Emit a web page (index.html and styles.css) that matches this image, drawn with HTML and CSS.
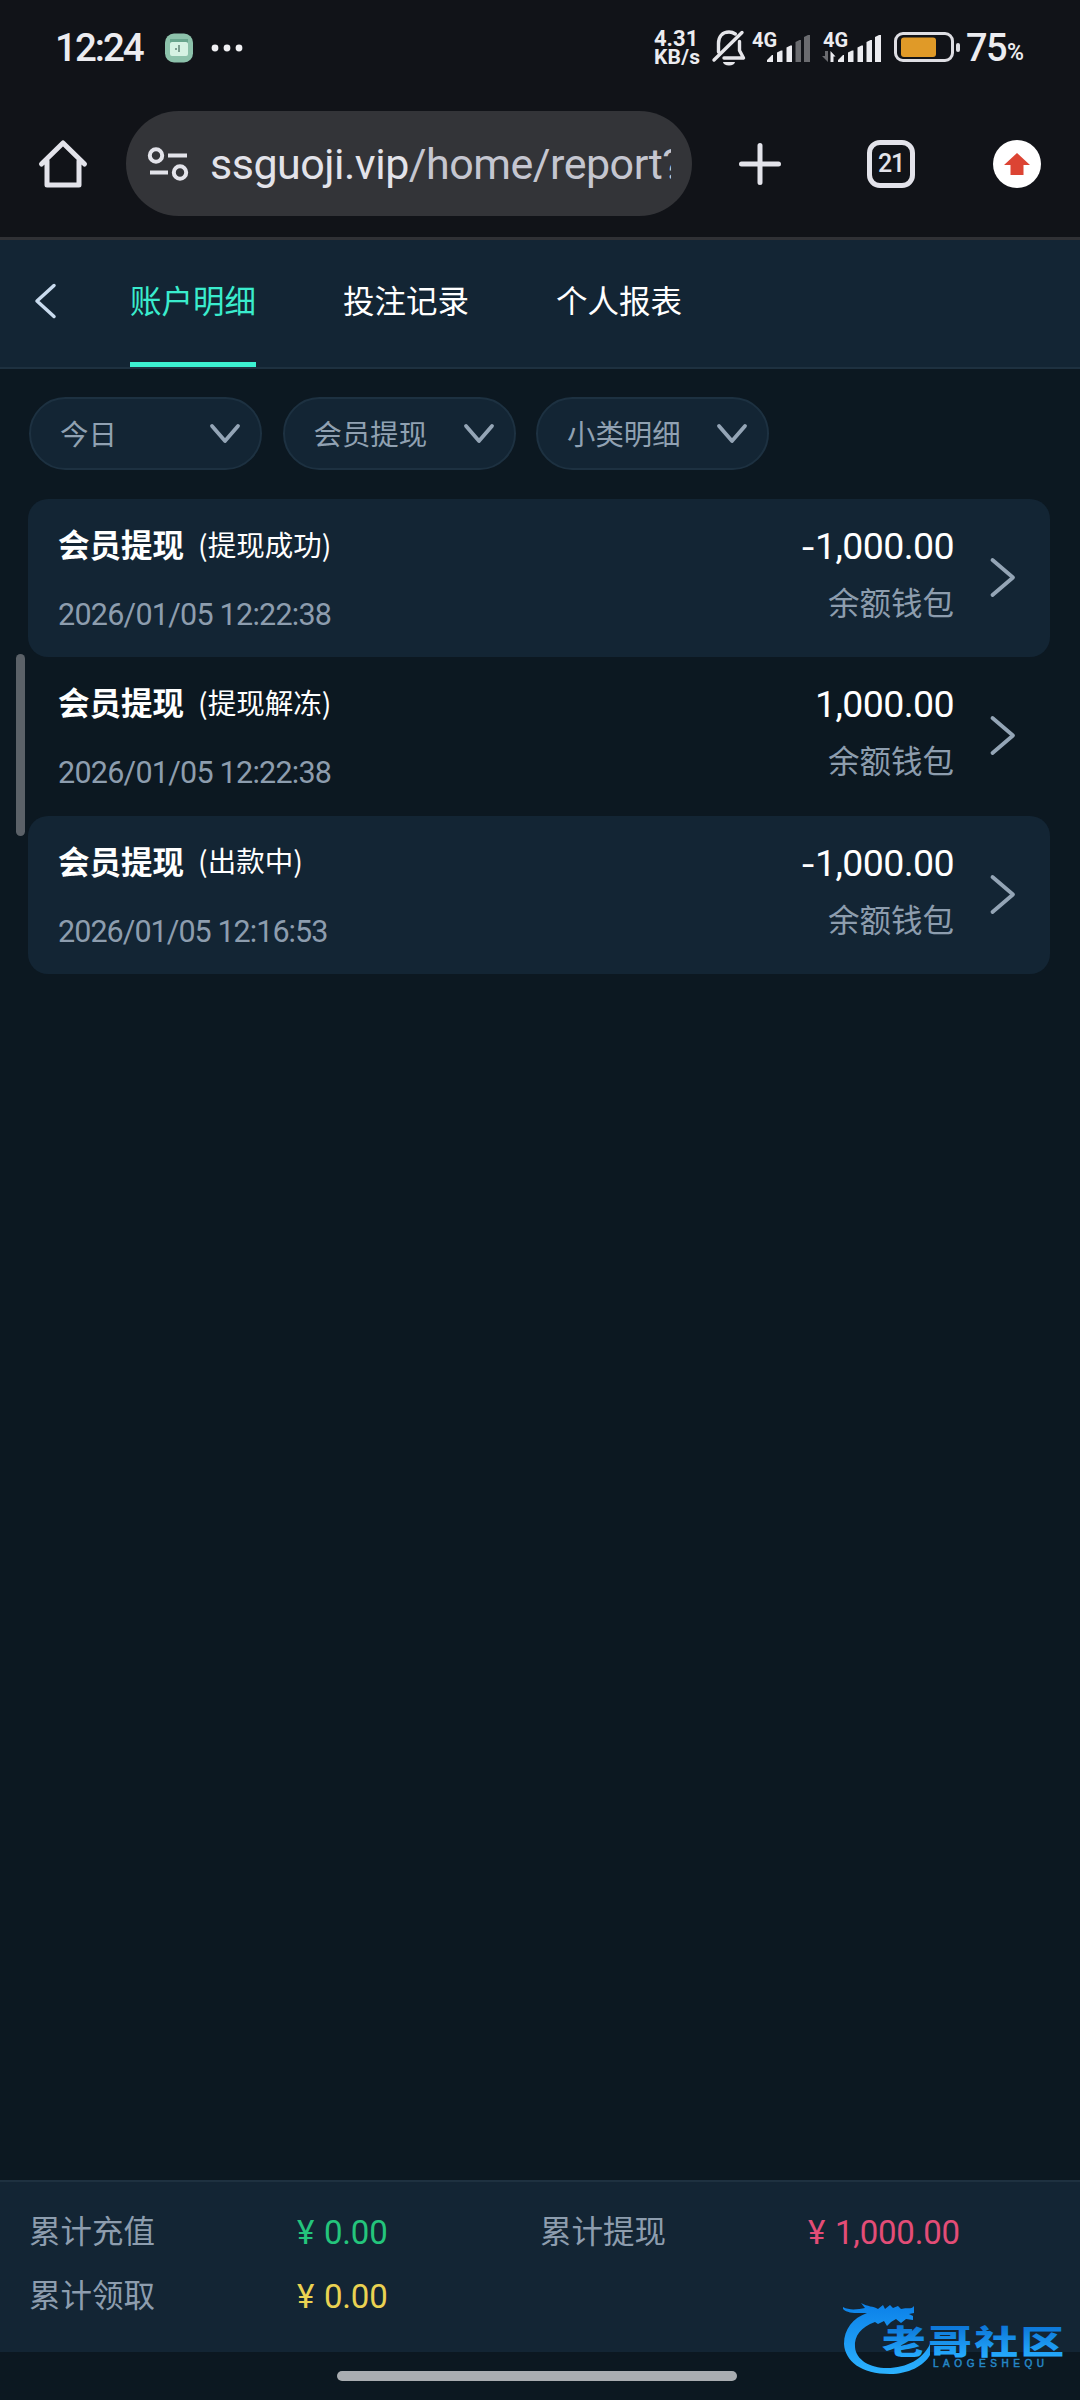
FILE: index.html
```html
<!DOCTYPE html>
<html lang="zh-CN">
<head>
<meta charset="utf-8">
<title>账户明细</title>
<link rel="stylesheet" href="styles.css">
</head>
<body>
<div class="screen">
  <header class="statusbar">
    <span class="clock">12:24</span>
    <svg class="app-badge" width="30" height="30" viewBox="0 0 30 30"><rect x="1" y="0.5" width="28" height="29" rx="9" fill="#8dc2ab"/><rect x="6" y="6" width="18" height="4" fill="#69a58d"/><rect x="6" y="9" width="18" height="14" rx="2" fill="#d6f2e3"/><path d="M15 12v7M12 15v2" stroke="#7d9e90" stroke-width="2"/></svg>
    <svg class="more" width="32" height="8" viewBox="0 0 32 8" fill="#f0f0f3"><circle cx="4" cy="4" r="3.4"/><circle cx="16" cy="4" r="3.4"/><circle cx="28" cy="4" r="3.4"/></svg>
    <div class="speed"><span class="rate">4.31</span><span class="unit">KB/s</span></div>
    <svg class="bell" width="36" height="38" viewBox="0 0 36 38" fill="none" stroke="#e6e6ea" stroke-width="3.4" stroke-linecap="round" stroke-linejoin="round"><path d="M7.5 23V14.500C7.500 7.500 11.500 3 18 3C20.500 3 22.500 3.700 24.300 5M28.500 12.500V21.500L32.500 29H13M3 31L31 3.500"/><path d="M12 33h12a6 3.500 0 0 1-12 0z" fill="#e6e6ea" stroke="none"/></svg>
    <div class="signal">
      <span class="net">4G</span>
      <svg width="60" height="30" viewBox="0 0 60 30" fill="#ececf0"><path d="M15 29v-2l5-5h1v7zM25 29V19.500l4-2h1.500V29zM34.500 29V14.500l4-2H40V29z"/><path d="M43.500 29V9l4-2H49v22zM52 29V4l4-2h2v27z" fill="#6a6b6f"/></svg>
    </div>
    <div class="signal second">
      <span class="net">4G</span>
      <svg width="60" height="30" viewBox="0 0 60 30" fill="#ececf0"><path d="M15 29v-2l5-5h1v7zM25 29V19.500l4-2h1.500V29zM34.500 29V14.500l4-2H40V29zM43.500 29V9l4-2H49v22zM52 29V4l4-2h2v27zM7.500 29V18l5 5.500H10.500V29z"/><path d="M5 18v11L-1 23h3V18z" fill="#6a6b6f"/></svg>
    </div>
    <svg class="battery" width="68" height="32" viewBox="0 0 68 32"><rect x="1.500" y="1.500" width="57" height="27" rx="7.500" fill="none" stroke="#dedee3" stroke-width="3"/><rect x="7" y="5.500" width="35" height="19.500" rx="3" fill="#e09a28"/><rect x="62" y="11" width="4" height="9" rx="2" fill="#dedee3"/></svg>
    <span class="level">75</span><span class="percent">%</span>
  </header>

  <div class="toolbar">
    <svg class="home" width="50" height="50" viewBox="0 0 50 50" fill="none" stroke="#e3e3ea" stroke-width="5" stroke-linejoin="round" stroke-linecap="round"><path d="M3.500 25L25 4L46.500 25M9 22V46H41V22"/></svg>
    <div class="omnibox">
      <svg width="42" height="36" viewBox="0 0 42 36" fill="none" stroke="#e3e3ea" stroke-width="4"><circle cx="8" cy="9.500" r="6.200"/><path d="M20 9.500h19M2 26.500h18"/><circle cx="32" cy="26.500" r="6.200"/></svg>
      <div class="url">ssguoji.vip<span class="path">/home/report?</span></div>
    </div>
    <svg class="plus" width="44" height="44" viewBox="0 0 44 44" stroke="#e3e3ea" stroke-width="5" stroke-linecap="round"><path d="M22 3.500v37M3.500 22h37"/></svg>
    <div class="tabs-count">21</div>
    <svg class="update" width="48" height="48" viewBox="0 0 48 48"><circle cx="24" cy="24" r="24" fill="#fff"/><path d="M24 13L37 25H30.500V35H17.500V25H11z" fill="#dc4433"/></svg>
  </div>

  <nav class="nav">
    <svg class="back" width="24" height="38" viewBox="0 0 24 38" fill="none" stroke="#c9dbee" stroke-width="3.500" stroke-linecap="round" stroke-linejoin="round"><path d="M20 3.500L3 19L20 34.500"/></svg>
    <a class="tab active">账户明细</a>
    <a class="tab">投注记录</a>
    <a class="tab">个人报表</a>
  </nav>

  <div class="filters">
    <div class="filter">今日<svg width="32" height="22" viewBox="0 0 32 22"><path d="M3 3L16 18L29 3"/></svg></div>
    <div class="filter">会员提现<svg width="32" height="22" viewBox="0 0 32 22"><path d="M3 3L16 18L29 3"/></svg></div>
    <div class="filter">小类明细<svg width="32" height="22" viewBox="0 0 32 22"><path d="M3 3L16 18L29 3"/></svg></div>
  </div>

  <main class="records">
    <article class="record filled">
      <div class="info"><div class="title"><b>会员提现</b><span>(提现成功)</span></div><time>2026/01/05 12:22:38</time></div>
      <div class="sum"><div class="amount"><i>-</i>1,000.00</div><div class="wallet">余额钱包</div></div>
      <svg width="28" height="42" viewBox="0 0 28 42"><path d="M3.500 4L24 21.500L3.500 39"/></svg>
    </article>
    <article class="record">
      <div class="info"><div class="title"><b>会员提现</b><span>(提现解冻)</span></div><time>2026/01/05 12:22:38</time></div>
      <div class="sum"><div class="amount">1,000.00</div><div class="wallet">余额钱包</div></div>
      <svg width="28" height="42" viewBox="0 0 28 42"><path d="M3.500 4L24 21.500L3.500 39"/></svg>
    </article>
    <article class="record filled">
      <div class="info"><div class="title"><b>会员提现</b><span>(出款中)</span></div><time class="tight">2026/01/05 12:16:53</time></div>
      <div class="sum"><div class="amount"><i>-</i>1,000.00</div><div class="wallet">余额钱包</div></div>
      <svg width="28" height="42" viewBox="0 0 28 42"><path d="M3.500 4L24 21.500L3.500 39"/></svg>
    </article>
  </main>

  <footer class="totals">
    <div class="total"><span>累计充值</span><span class="value green"><i>¥</i>0.00</span></div>
    <div class="total"><span>累计提现</span><span class="value red"><i>¥</i>1,000.00</span></div>
    <div class="total"><span>累计领取</span><span class="value yellow"><i>¥</i>0.00</span></div>
  </footer>
  <div class="gesture"><div class="handle"></div></div>

  <div class="edge-handle"></div>
  <svg class="watermark" width="230" height="90" viewBox="0 0 230 90">
    <defs>
      <linearGradient id="ring" x1="0" y1="0" x2="0" y2="1"><stop offset="0" stop-color="#0b80e8"/><stop offset="1" stop-color="#2cb2ff"/></linearGradient>
      <linearGradient id="word" x1="0" y1="0" x2="0" y2="1"><stop offset="0.200" stop-color="#0b74d6"/><stop offset="0.900" stop-color="#26adff"/></linearGradient>
    </defs>
    <path fill="url(#ring)" d="M2 9C9 13 18 11 24 10L20 5C27 9 32 8 37 11L42 7L44 11L49 7L52 10L57 8L60 11C66 9 70 12 73 8V15L68 16L72 18V22L65 21L60 25L55 21L50 24L46 28L43 23L37 26L34 24C20 29 13 38 14 49C15 62 29 70 46 70C66 70 82 61 89 46V57C83 68 67 76 49 76C20 76 4 63 3 46C3 31 12 20 26 15C17 15 7 16 2 11Z"/>
    <text class="mark-name" transform="translate(41 55.500) scale(1.320 1)" textLength="138" fill="url(#word)">老哥社区</text>
    <text class="mark-latin" x="92" y="69" textLength="111">LAOGESHEQU</text>
  </svg>
</div>
</body>
</html>
```
FILE: styles.css
```css
* { box-sizing: border-box; }
body { margin: 0; background: #0c1821; }
svg { display: block; flex: none; overflow: visible; }
i { font-style: normal; }

.screen {
  position: relative;
  display: flex;
  flex-direction: column;
  width: 1080px;
  height: 2400px;
  overflow: hidden;
  background: #0c1821;
  color: #fff;
  font-family: Roboto, "Noto Sans CJK SC", sans-serif;
  white-space: nowrap;
}

/* system status bar */
.statusbar {
  display: flex;
  align-items: center;
  height: 95px;
  padding-left: 55px;
  background: #111318;
  color: #ececf0;
}
.clock { width: 109px; font-size: 38.500px; font-weight: 500; letter-spacing: -2px; }
.more { margin-left: 17px; }
.speed { display: flex; flex-direction: column; width: 58px; margin-left: 411px; font-weight: 700; line-height: 19px; }
.rate { font-size: 22px; letter-spacing: 0; }
.unit { font-size: 21px; letter-spacing: 0.2px; }
.bell { margin-left: -1px; }
.signal { position: relative; width: 60px; height: 30px; margin-left: 5px; }
.signal.second { margin-left: 11px; }
.net { position: absolute; left: 0; top: -4px; font-size: 20px; line-height: 22px; font-weight: 700; }
.battery { margin-left: 11px; }
.level { width: 41px; margin-left: 4px; font-size: 38px; font-weight: 500; letter-spacing: -1.5px; }
.percent { padding-top: 9px; font-size: 23px; font-weight: 500; }

/* browser toolbar */
.toolbar {
  display: flex;
  align-items: center;
  height: 145px;
  padding: 0 0 5px 38px;
  border-bottom: 3px solid #303135;
  background: #111318;
}
.omnibox {
  display: flex;
  align-items: center;
  width: 566px;
  height: 105px;
  margin-left: 38px;
  padding-left: 22px;
  border-radius: 53px;
  background: #333438;
}
.url {
  width: 461px;
  margin-left: 20px;
  padding-top: 1px;
  overflow: hidden;
  color: #e3e3ea;
  font-size: 43px;
  line-height: 60px;
  letter-spacing: -0.5px;
}
.path { color: #c5c6d0; }
.plus { margin-left: 46px; }
.tabs-count {
  display: grid;
  place-items: center;
  width: 48px;
  height: 48px;
  margin-left: 85px;
  border: 5px solid #e3e3ea;
  border-radius: 13px;
  color: #e3e3ea;
  font-size: 25px;
  line-height: 30px;
  font-weight: 500;
  letter-spacing: -1.3px;
}
.update { margin-left: 78px; }

/* page navigation */
.nav {
  display: flex;
  align-items: center;
  gap: 87px;
  height: 129px;
  padding-left: 34px;
  border-bottom: 2px solid #1e3140;
  background: #132534;
}
.back { margin: -5px -15px 0 0; }
.tab {
  display: grid;
  align-items: center;
  height: 127px;
  padding-top: 2px;
  border-bottom: 4px solid transparent;
  font-size: 31.500px;
  line-height: 46px;
}
.tab.active {
  color: #3aeccd;
  background: linear-gradient(#3cf2d2, #3cf2d2) 0 100% / 100% 5px no-repeat border-box;
}

.filters { display: flex; gap: 20.500px; padding: 28px 0 0 29px; }
.filter {
  display: flex;
  align-items: center;
  justify-content: space-between;
  width: 233px;
  height: 73px;
  padding: 0 19px 2px 29px;
  border: 2px solid #1d3141;
  border-radius: 37px;
  background: #132534;
  color: #90a1b2;
  font-size: 28.400px;
}
.filter svg { margin-top: 3px; }
.filter path, .record path { fill: none; stroke: #94a5b6; stroke-width: 3.800; stroke-linecap: round; stroke-linejoin: round; }

/* transaction rows */
.records { flex: 1; padding: 29px 30px 0 28px; }
.record {
  display: flex;
  align-items: flex-start;
  height: 158.300px;
  padding: 19px 33px 0 30px;
  border-radius: 20px;
}
.record.filled { background: #132534; }
.info { flex: 1; }
.title { display: flex; align-items: center; gap: 14px; height: 50px; font-family: "Noto Sans CJK SC", sans-serif; font-size: 31.500px; }
.title span { font-size: 28.500px; }
time { display: block; margin-top: 27px; color: #8d9dae; font-size: 30.500px; line-height: 40px; letter-spacing: -0.75px; }
time.tight { letter-spacing: -0.95px; }
.sum { padding-top: 2px; text-align: right; }
.amount { font-size: 37.500px; line-height: 52px; letter-spacing: -0.6px; }
.amount i { font-family: Inter, sans-serif; font-size: 33px; line-height: 1; }
.wallet { margin-top: 10px; color: #8d9dae; font-size: 31.500px; line-height: 46px; }
.record svg { margin: 38px 0 0 35px; }

/* totals */
.totals {
  display: grid;
  grid-template-columns: 511px 511px;
  align-content: start;
  height: 172px;
  padding: 19px 29px 0;
  border-top: 2px solid #1e3140;
  background: #132534;
  color: #8d9dae;
  font-size: 31.500px;
  line-height: 64px;
}
.total { display: grid; grid-template-columns: 268px 1fr; }
.value { font-size: 33px; letter-spacing: -0.2px; }
.value i { display: inline-block; width: 27px; font-size: 33px; }
.green { color: #24c57c; }
.red { color: #e34d77; }
.yellow { color: #ead252; }

.gesture { display: flex; justify-content: center; height: 48px; padding: 19px 6px 0 0; }
.handle { width: 400px; height: 10px; border-radius: 5px; background: #a9adb1; }
.edge-handle { position: absolute; left: 16px; top: 654px; width: 9px; height: 182px; border-radius: 5px; background: #5b6168; }

.watermark { position: absolute; left: 841px; top: 2298px; }
.mark-name { font: 900 33px "Noto Sans CJK SC", sans-serif; }
.mark-latin { font: 400 10px "Liberation Sans", sans-serif; fill: #2586c4; stroke: #2586c4; stroke-width: 0.500; }
```
